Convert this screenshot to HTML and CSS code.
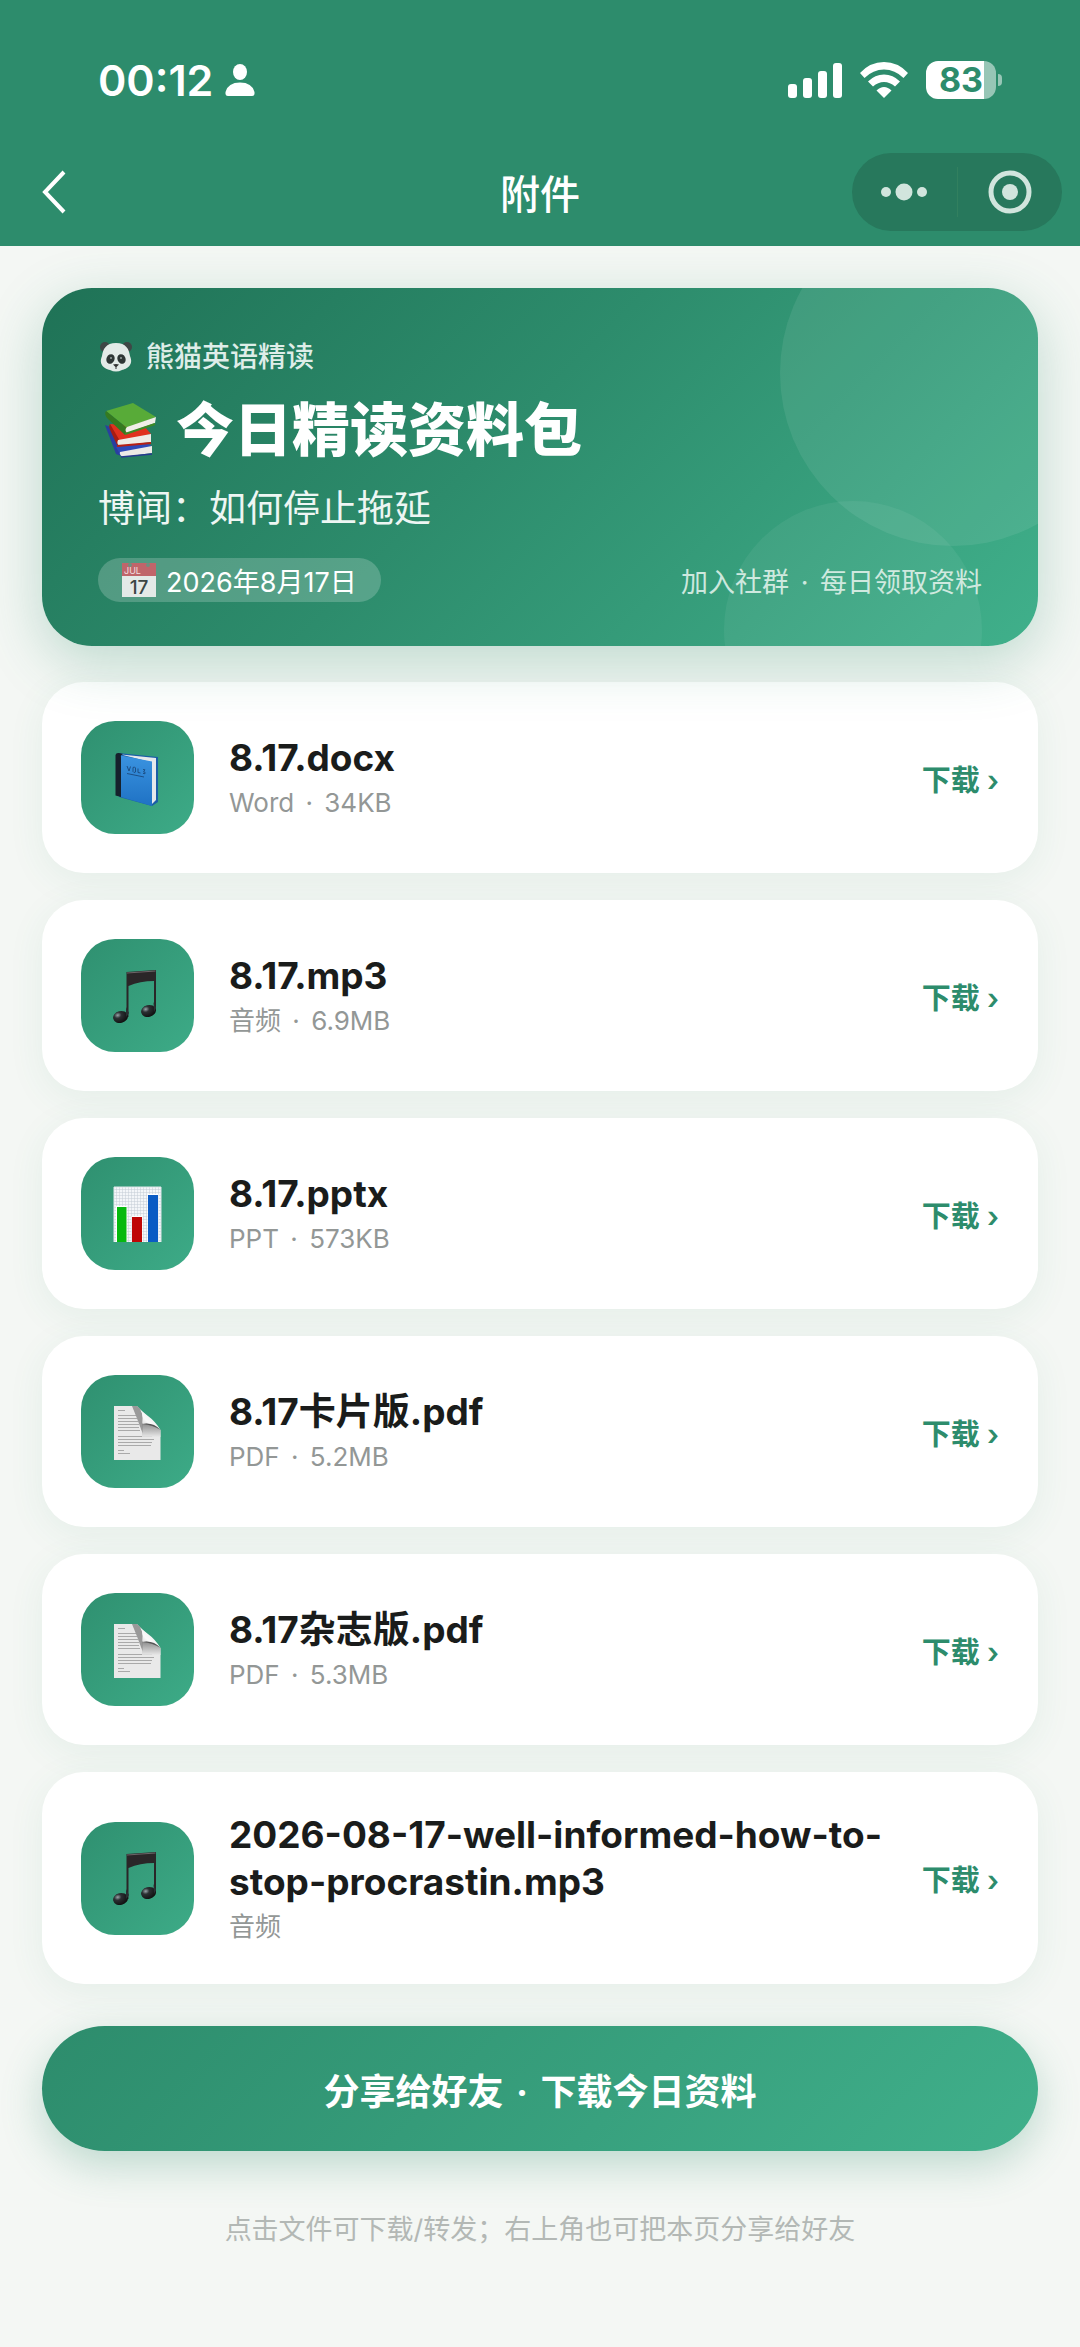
FILE: index.html
```
<!DOCTYPE html>
<html lang="zh-CN">
<head>
  <meta charset="UTF-8" />
  <meta name="viewport" content="width=device-width, initial-scale=1.0" />
  <title>附件</title>
  <link rel="stylesheet" href="styles.css">
</head>
<body>
  <!-- shared file icons -->
  <svg class="sprite" aria-hidden="true">
    <defs>
      <linearGradient id="g-book" x1="0" y1="0" x2="0" y2="1">
        <stop offset="0" stop-color="#3a93e0" />
        <stop offset="1" stop-color="#1f72c4" />
      </linearGradient>
      <linearGradient id="g-fold" x1="0" y1="1" x2="1" y2="0">
        <stop offset="0" stop-color="#b5b5b5" />
        <stop offset="0.4" stop-color="#fafafa" />
        <stop offset="1" stop-color="#e2e2e2" />
      </linearGradient>
      <linearGradient id="g-shade" x1="0" y1="0" x2="0" y2="1">
        <stop offset="0" stop-color="#777" />
        <stop offset="1" stop-color="#e8e8e8" />
      </linearGradient>
      <radialGradient id="g-note" cx="0.35" cy="0.3" r="0.7">
        <stop offset="0" stop-color="#9aa3a8" />
        <stop offset="0.35" stop-color="#2b3033" />
        <stop offset="1" stop-color="#111" />
      </radialGradient>
      <pattern id="p-grid" width="3" height="3" patternUnits="userSpaceOnUse">
        <rect width="3" height="3" fill="#f3f6f9" />
        <path d="M0 0H3M0 0V3" stroke="#c3ccd6" stroke-width="1" />
      </pattern>
    </defs>
    <symbol id="i-book" viewBox="0 0 56 56">
      <path d="M8 3L48 7V52L42 56L9 47Z" fill="#1b5ea6" />
      <path d="M11 4.500L46 8V50L42 54L40 12Z" fill="#e6e9ec" />
      <path d="M11 5.500L42 11.500V56L11 47Z" fill="url(#g-book)" />
      <path d="M5.500 5Q6 2.500 9 3L13 4Q10 5 11 7V47L5.500 45.500Z" fill="#16212c" />
      <path d="M17 16l2 5 1.500-4.500M23 17.500v4l1 1 1.500-.5v-4l-1-1zM28 18.500v4l2.500.5M33 19.500l2 .3-1.500 2 1.500.4v1.500l-2-.3" fill="none" stroke="#1c4f86" stroke-width="1" />
      <path d="M17 23.500L34 27" stroke="#1c4f86" stroke-width="1" />
    </symbol>
    <symbol id="i-music" viewBox="0 0 56 56">
      <path d="M16.500 4L46 2V43H44V13Q30 13 18.500 18V49H16.500Z" fill="#2a2628" />
      <path d="M17 5L45.500 3" stroke="#6d6568" stroke-width="1" />
      <ellipse cx="10.500" cy="49" rx="7.500" ry="6" transform="rotate(-14 10.500 49)" fill="url(#g-note)" />
      <ellipse cx="38.500" cy="43" rx="7.500" ry="6" transform="rotate(-14 38.500 43)" fill="url(#g-note)" />
      <path d="M16 39l3 6-3 4zM43.500 34l2.500 6-2 4z" fill="#2a3033" />
    </symbol>
    <symbol id="i-chart" viewBox="0 0 56 56">
      <path d="M4 1H51V56H4Z" fill="url(#p-grid)" />
      <path d="M4 56V1H51V56" fill="none" stroke="#dfe5ea" stroke-width="1" />
      <path d="M6 20H17V56H6ZM21.500 30H32.500V56H21.500ZM37.500 8H48.500V56H37.500Z" fill="#fff" />
      <path d="M7 21H16.500V56H7Z" fill="#06b90f" />
      <path d="M22 31H32V56H22Z" fill="#bf0606" />
      <path d="M38 9H48V56H38Z" fill="#0a5bc4" />
    </symbol>
    <symbol id="i-page" viewBox="0 0 56 56">
      <path d="M4 2H27L50.500 26V56H4Z" fill="#e9e9e9" />
      <path d="M8 6.500h7M8 11.500h18M8 14.500h19M8 17.500h20M8 20.500h21M8 23.500h21M8 26.500h22M8 32.500h34M8 35.500h36M8 38.500h34M8 41.500h33M8 46.500h6M8 49.500h12" stroke="#a9a9a9" stroke-width="1" />
      <path d="M32 19Q42 19 50.500 26V33H32Z" fill="url(#g-shade)" opacity=".85" />
      <path d="M22 2H27Q34 6 32.500 20V29Q27 14 22 2Z" fill="#858585" opacity=".8" />
      <path d="M27 2Q34 7 32.500 20Q43 18 50.500 26Q45 17 38 12Q31 7 27 2Z" fill="url(#g-fold)" />
      <path d="M32.500 20Q43 18 50.500 26Q43 21 32.500 20Z" fill="#555" />
    </symbol>
  </svg>

  <header class="topbar">
    <div class="status">
      <div class="status-left">
        <span class="time">00:12</span>
        <svg width="30" height="32" viewBox="0 0 30 32" fill="#fff">
          <ellipse cx="15" cy="8" rx="7" ry="8" />
          <path d="M3 32Q0 32 .5 28Q3 18.500 15 18.500T29.500 28Q30 32 27 32Z" />
        </svg>
      </div>
      <div class="status-right">
        <svg width="54" height="35" viewBox="0 0 54 35" fill="#fff">
          <rect x="0" y="21" width="9" height="14" rx="3" />
          <rect x="15" y="15" width="9" height="20" rx="3" />
          <rect x="30" y="8" width="9" height="27" rx="3" />
          <rect x="45" y="0" width="9" height="35" rx="3" />
        </svg>
        <svg width="48" height="36" viewBox="0 0 48 36" fill="#fff">
          <path d="M0 11Q10 0 24 0T48 11L43.500 16Q35 7.500 24 7.500T4.500 16Z" />
          <path d="M8 19.500Q15 12.500 24 12.500T40 19.500L35 24.500Q30 20 24 20T13 24.500Z" />
          <path d="M16.500 28.500Q20 25 24 25T31.500 28.500L24 36Z" />
        </svg>
        <div class="battery"><span>83</span></div>
      </div>
    </div>
    <nav class="navbar">
      <button class="back" aria-label="返回">
        <svg width="24" height="44" viewBox="0 0 24 44" fill="none" stroke="#fff" stroke-width="4">
          <path d="M22 2L3 22L22 42" />
        </svg>
      </button>
      <h1>附件</h1>
      <div class="capsule">
        <button aria-label="更多">
          <svg width="48" height="18" viewBox="0 0 48 18" fill="#d1e5dd">
            <circle cx="6" cy="9" r="5" />
            <circle cx="24" cy="9" r="8.500" />
            <circle cx="42" cy="9" r="5" />
          </svg>
        </button>
        <button aria-label="关闭">
          <svg width="44" height="44" viewBox="0 0 44 44">
            <circle cx="22" cy="22" r="19" fill="none" stroke="#d1e5dd" stroke-width="5" />
            <circle cx="22" cy="22" r="8" fill="#d1e5dd" />
          </svg>
        </button>
      </div>
    </nav>
  </header>

  <main class="page">
    <section class="hero">
      <div class="hero-tag">
        <svg width="36" height="32" viewBox="0 0 36 32">
          <circle cx="7" cy="6" r="5" fill="#3f4746" />
          <circle cx="29" cy="6" r="5" fill="#3f4746" />
          <path d="M18 2C28 2 31 8 32 15C36 24 29 28 24 29Q18 32 12 29C7 28 0 24 4 15C5 8 8 2 18 2Z" fill="#e3eae7" />
          <ellipse cx="12.500" cy="18" rx="4" ry="5" transform="rotate(25 12.500 18)" fill="#2f3635" />
          <ellipse cx="23.500" cy="18" rx="4" ry="5" transform="rotate(-25 23.500 18)" fill="#2f3635" />
          <circle cx="13" cy="17" r="1" fill="#98a3a0" />
          <circle cx="23" cy="17" r="1" fill="#98a3a0" />
          <path d="M15 23.500Q18 22.500 21 23.500L18.500 26V28H17.500V26Z" fill="#333" />
        </svg>
        <span>熊猫英语精读</span>
      </div>
      <h2>
        <svg width="64" height="56" viewBox="0 0 64 56">
          <path d="M7 23L15 26L23 54L18 52Z" fill="#2a3fa0" />
          <path d="M18 45L48 41L54 44L23 54Z" fill="#2f49b8" />
          <path d="M22 50L54 44V51L25 55Q21 53 22 50Z" fill="#eceae6" />
          <path d="M23 55L54 52" stroke="#26398f" stroke-width="1.500" />
          <path d="M12 22L46 24L53 32L20 40Z" fill="#e0301e" />
          <path d="M12 22Q10 24 13 30L19 43L22 39Z" fill="#a81c12" />
          <path d="M20 38L53 32V40L22 44Q18 42 20 38Z" fill="#efece6" />
          <path d="M19 44L53 41" stroke="#b81f14" stroke-width="2" />
          <path d="M8 9L35 1L58 15L29 26Z" fill="#58ab38" />
          <path d="M8 9Q6 12 9 16L27 33L29 26Z" fill="#357a20" />
          <path d="M29 25L58 15L57 21L29 31Q26 28 29 25Z" fill="#f0eee8" />
          <path d="M27 32L57 22" stroke="#3d8a25" stroke-width="2" />
        </svg>
        <span>今日精读资料包</span>
      </h2>
      <p class="hero-sub">博闻：如何停止拖延</p>
      <div class="hero-foot">
        <span class="date">
          <svg width="34" height="36" viewBox="0 0 34 36">
            <rect x="0" y="1" width="34" height="34" fill="#e4e9e7" />
            <rect x="0" y="1" width="34" height="13" fill="#c0656a" />
            <circle cx="8" cy="3" r="2" fill="#6f8f80" />
            <circle cx="26" cy="3" r="2" fill="#6f8f80" />
            <text x="2" y="12" class="cal-month">JUL</text>
            <text x="17" y="32" class="cal-day" text-anchor="middle">17</text>
          </svg>
          <span>2026年8月17日</span>
        </span>
        <span class="join">加入社群 <span class="dot">·</span> 每日领取资料</span>
      </div>
    </section>

    <ul class="files">
      <li class="file">
        <div class="file-icon"><svg><use href="#i-book" /></svg></div>
        <div class="file-info">
          <div class="file-name">8.17.docx</div>
          <div class="file-meta">Word <span class="dot">·</span> 34KB</div>
        </div>
        <a class="download" href="#">下载 ›</a>
      </li>
      <li class="file">
        <div class="file-icon"><svg><use href="#i-music" /></svg></div>
        <div class="file-info">
          <div class="file-name">8.17.mp3</div>
          <div class="file-meta">音频 <span class="dot">·</span> 6.9MB</div>
        </div>
        <a class="download" href="#">下载 ›</a>
      </li>
      <li class="file">
        <div class="file-icon"><svg><use href="#i-chart" /></svg></div>
        <div class="file-info">
          <div class="file-name">8.17.pptx</div>
          <div class="file-meta">PPT <span class="dot">·</span> 573KB</div>
        </div>
        <a class="download" href="#">下载 ›</a>
      </li>
      <li class="file">
        <div class="file-icon"><svg><use href="#i-page" /></svg></div>
        <div class="file-info">
          <div class="file-name">8.17卡片版.pdf</div>
          <div class="file-meta">PDF <span class="dot">·</span> 5.2MB</div>
        </div>
        <a class="download" href="#">下载 ›</a>
      </li>
      <li class="file">
        <div class="file-icon"><svg><use href="#i-page" /></svg></div>
        <div class="file-info">
          <div class="file-name">8.17杂志版.pdf</div>
          <div class="file-meta">PDF <span class="dot">·</span> 5.3MB</div>
        </div>
        <a class="download" href="#">下载 ›</a>
      </li>
      <li class="file">
        <div class="file-icon"><svg><use href="#i-music" /></svg></div>
        <div class="file-info">
          <div class="file-name">2026-08-17-well-informed-how-to-stop-procrastin.mp3</div>
          <div class="file-meta">音频</div>
        </div>
        <a class="download" href="#">下载 ›</a>
      </li>
    </ul>

    <button class="share">分享给好友 <span class="dot">·</span> 下载今日资料</button>
    <p class="hint">点击文件可下载/转发；右上角也可把本页分享给好友</p>
  </main>
</body>
</html>
```
FILE: styles.css
```
:root {
  --green: #2d8c6c;
  --green-dark: #1f7256;
  --green-light: #40b08b;
  --page-bg: #f4f7f4;
  --text: #1a1c1b;
  --muted: #939796;
}

* {
  box-sizing: border-box;
}

body {
  margin: 0;
  min-height: 100vh;
  background: var(--page-bg);
  color: var(--text);
  font-family: Inter, 'Noto Sans CJK SC', sans-serif;
}

h1, h2, p, ul {
  margin: 0;
  padding: 0;
}

svg {
  display: block;
  flex: none;
}

button {
  border: none;
  padding: 0;
  background: none;
  color: inherit;
  font-family: inherit;
  cursor: pointer;
}

.sprite {
  position: absolute;
  width: 0;
  height: 0;
}

.dot {
  margin: 0 4px;
}

/* top bar */
.topbar {
  background: var(--green);
  color: #fff;
}

.status {
  display: flex;
  justify-content: space-between;
  align-items: center;
  height: 138px;
  padding: 22px 78px 0 98px;
}

.status-left {
  display: flex;
  align-items: center;
  gap: 12px;
}

.time {
  font-size: 43px;
  font-weight: 600;
}

.status-right {
  display: flex;
  align-items: center;
  gap: 18px;
}

.battery {
  position: relative;
  width: 70px;
  height: 38px;
  margin-right: 6px;
  border-radius: 12px;
  background: linear-gradient(90deg, #fff 83%, #97c6b6 83%);
  color: var(--green);
  font-size: 34px;
  font-weight: 700;
  line-height: 38px;
  text-align: center;
}

.battery::after {
  content: '';
  position: absolute;
  left: 72px;
  top: 13px;
  width: 4px;
  height: 12px;
  border-radius: 0 4px 4px 0;
  background: #97c6b6;
}

.navbar {
  display: grid;
  grid-template-columns: 1fr auto 1fr;
  align-items: center;
  height: 108px;
  padding: 0 18px;
}

.back {
  justify-self: start;
  padding: 0 24px;
}

.navbar h1 {
  font-size: 40px;
  font-weight: 500;
}

.capsule {
  display: flex;
  justify-self: end;
  align-items: center;
  width: 210px;
  height: 78px;
  border-radius: 39px;
  background: #27785c;
}

.capsule button {
  display: flex;
  flex: 1;
  align-items: center;
  justify-content: center;
  height: 50px;
}

.capsule button + button {
  border-left: 1px solid #32805f;
}

/* content */
.page {
  padding: 42px;
}

.hero {
  position: relative;
  overflow: hidden;
  padding: 49px 56px 44px;
  border-radius: 50px;
  background: linear-gradient(135deg, var(--green-dark) 0%, var(--green) 45%, var(--green-light) 100%);
  box-shadow: 0 16px 56px rgba(45, 140, 108, 0.28);
  color: #fff;
}

.hero::before,
.hero::after {
  content: '';
  position: absolute;
  border-radius: 50%;
}

.hero::before {
  top: -88px;
  right: -88px;
  width: 346px;
  height: 346px;
  background: rgba(255, 255, 255, 0.08);
}

.hero::after {
  right: 56px;
  bottom: -113px;
  width: 258px;
  height: 258px;
  background: rgba(255, 255, 255, 0.06);
}

.hero-tag {
  display: flex;
  align-items: center;
  gap: 12px;
  color: #deede8;
  font-size: 28px;
  font-weight: 500;
  line-height: 40px;
}

.hero h2 {
  display: flex;
  align-items: center;
  gap: 14px;
  margin-top: 18px;
  font-size: 58px;
  font-weight: 800;
  line-height: 70px;
}

.hero-sub {
  margin-top: 19px;
  color: #edf6f3;
  font-size: 37px;
  line-height: 50px;
}

.hero-foot {
  display: flex;
  justify-content: space-between;
  align-items: center;
  margin-top: 24px;
}

.date {
  display: flex;
  align-items: center;
  gap: 10px;
  height: 44px;
  padding: 0 24px;
  border-radius: 22px;
  background: rgba(255, 255, 255, 0.2);
  font-size: 27px;
}

.cal-month {
  fill: #f3dfe0;
  font-size: 9px;
}

.cal-day {
  fill: #3c4543;
  font-size: 19px;
  font-weight: 500;
}

.join {
  color: #cde8de;
  font-size: 27px;
}

/* file list */
.files {
  display: flex;
  flex-direction: column;
  gap: 27px;
  margin-top: 36px;
  list-style: none;
}

.file {
  display: flex;
  align-items: center;
  padding: 39px;
  border-radius: 42px;
  background: #fff;
  box-shadow: 0 8px 36px rgba(45, 140, 108, 0.08);
}

.file-icon {
  display: flex;
  flex: none;
  align-items: center;
  justify-content: center;
  width: 113px;
  height: 113px;
  border-radius: 34px;
  background: linear-gradient(135deg, #2f9070, #3dab87);
}

.file-icon svg {
  width: 56px;
  height: 56px;
}

.file-info {
  flex: 1;
  min-width: 0;
  margin: 0 24px 0 35px;
}

.file-name {
  font-size: 37px;
  font-weight: 700;
  line-height: 47px;
}

.file-meta {
  margin-top: 4px;
  color: var(--muted);
  font-size: 26px;
  line-height: 36px;
}

.download {
  flex: none;
  color: var(--green);
  font-size: 29px;
  font-weight: 600;
  text-decoration: none;
}

.share {
  display: block;
  width: 100%;
  height: 125px;
  margin-top: 42px;
  border-radius: 63px;
  background: linear-gradient(135deg, var(--green), var(--green-light));
  box-shadow: 0 14px 42px rgba(45, 140, 108, 0.28);
  color: #fff;
  font-size: 36px;
  font-weight: 700;
}

.hint {
  margin-top: 59px;
  color: #b3b8b5;
  font-size: 27px;
  line-height: 40px;
  text-align: center;
}
```
